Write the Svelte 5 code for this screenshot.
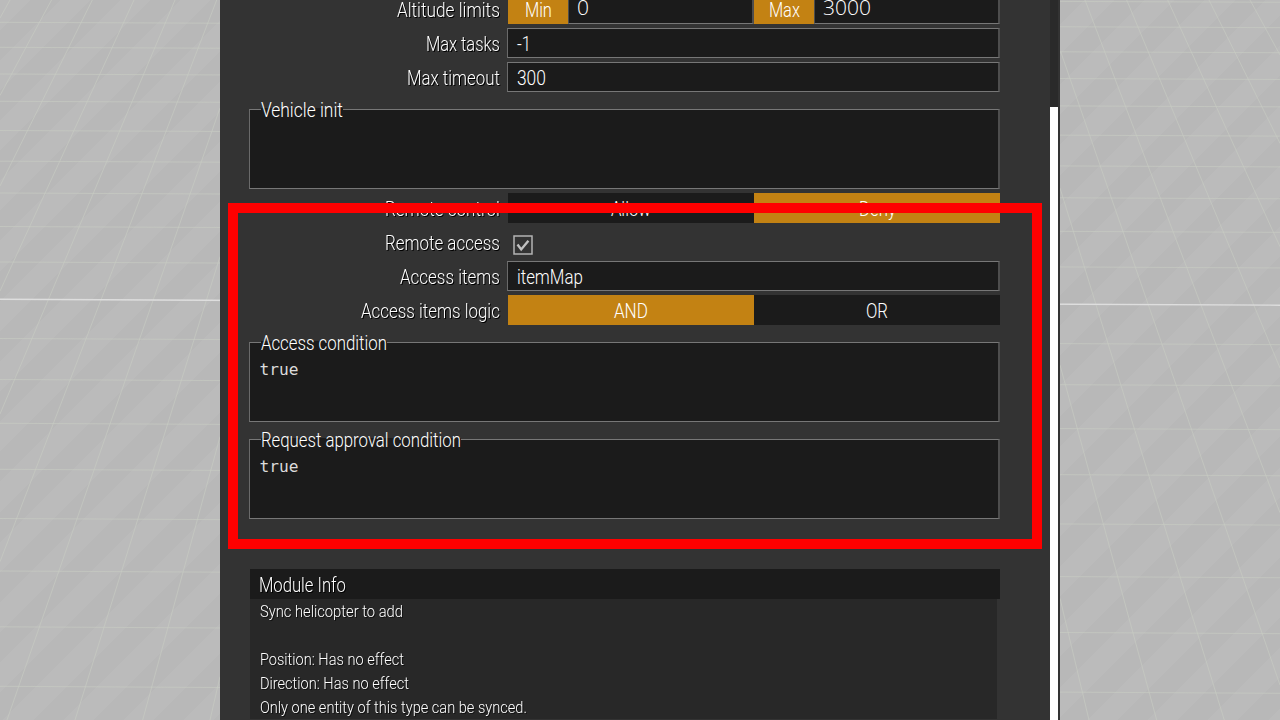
<script>
  const horizontals = [-3, 22.3, 47.3, 74, 101.3, 130.5, 161.2, 193, 226.5, 262, 338.5, 379.5, 423.3, 469.3, 518.5, 571, 626.8, 686.3];
  const verticals = [
    [10, 0, 0, 18], [51.5, 0, 0, 95.5], [92.3, 0, 0, 186], [134, 0, 0, 291],
    [175, 0, 0, 414], [216.7, 0, 0, 561.7], [220, 108, 7, 720], [220, 256.7, 75, 720],
    [220, 436.7, 142.7, 720], [220, 676.7, 210, 720],
    [1060, 598.3, 1089, 720], [1060, 365, 1156.7, 720], [1060, 188, 1224.3, 720],
    [1060.7, 51.7, 1280, 685], [1085, 0, 1280, 512.7], [1126.7, 0, 1280, 368],
    [1167.7, 0, 1280, 246.7], [1209, 0, 1280, 143.3], [1250, 0, 1280, 55]
  ];
  const info = [
    ['Sync helicopter to add', 143],
    ['', 0],
    ['Position: Has no effect', 144],
    ['Direction: Has no effect', 149],
    ['Only one entity of this type can be synced.', 267]
  ];
</script>

{#snippet text(value, width, baseline, size = 20, height = 30)}
  <svg class="text" {width} {height}>
    <text x="-0.1" y={baseline} font-size={size} textLength={width} lengthAdjust="spacingAndGlyphs">{value}</text>
  </svg>
{/snippet}

{#snippet area(label, width, value)}
  <div class="area">
    <div class="legend">{@render text(label, width, 20)}</div>
    <div class="field box">
      {#if value}
        <svg class="text" width="39" height="24">
          <text class="code" x="-0.4" y="17" font-size="16.5" textLength="39" lengthAdjust="spacingAndGlyphs">{value}</text>
        </svg>
      {/if}
    </div>
  </div>
{/snippet}

<main class="screen">
  <svg class="grid" width="1280" height="720">
    {#each horizontals as y}
      <line class="thin" x1="0" y1={y} x2="1280" y2={y + 5.3 + y / 400} />
    {/each}
    {#each verticals as [x1, y1, x2, y2]}
      <line class="thin" {x1} {y1} {x2} {y2} />
    {/each}
    <line class="horizon" x1="0" y1="299.3" x2="1280" y2="305.2" />
  </svg>

  <section class="panel">
    <div class="form">
      <div class="row">
        <div class="label">{@render text('Altitude limits', 103, 23)}</div>
        <div class="control split">
          <div class="tag">{@render text('Min', 27, 23)}</div>
          <div class="field alt">{@render text('0', 12, 20, 20.5)}</div>
          <div class="tag">{@render text('Max', 31, 23)}</div>
          <div class="field alt">{@render text('3000', 48, 20, 20.5)}</div>
        </div>
      </div>
      <div class="row">
        <div class="label">{@render text('Max tasks', 74, 23)}</div>
        <div class="control field">{@render text('-1', 14, 22)}</div>
      </div>
      <div class="row">
        <div class="label">{@render text('Max timeout', 93, 23)}</div>
        <div class="control field">{@render text('300', 29, 22)}</div>
      </div>
      {@render area('Vehicle init', 82, '')}
      <div class="row">
        <div class="label">{@render text('Remote control', 115, 23)}</div>
        <div class="control split">
          <div class="option">{@render text('Allow', 40, 23)}</div>
          <div class="option on">{@render text('Deny', 37, 23)}</div>
        </div>
      </div>
      <div class="row">
        <div class="label">{@render text('Remote access', 115, 23)}</div>
        <div class="control check">
          <svg width="20" height="20" viewBox="0 0 20 20">
            <rect x="1" y="1" width="18" height="18" fill="none" stroke="#b4b4b4" stroke-width="1.5" />
            <path d="M4.5 9.6 L8.2 14.4 L15.4 5.8" fill="none" stroke="#c0c0c0" stroke-width="2.4" />
          </svg>
        </div>
      </div>
      <div class="row">
        <div class="label">{@render text('Access items', 100, 23)}</div>
        <div class="control field">{@render text('itemMap', 66, 22)}</div>
      </div>
      <div class="row">
        <div class="label">{@render text('Access items logic', 139, 23)}</div>
        <div class="control split">
          <div class="option on">{@render text('AND', 34, 23)}</div>
          <div class="option">{@render text('OR', 22, 23)}</div>
        </div>
      </div>
      {@render area('Access condition', 126, 'true')}
      {@render area('Request approval condition', 200, 'true')}
      <div class="info">
        <div class="head">{@render text('Module Info', 87, 23)}</div>
        <div class="body">
          {#each info as [line, width]}
            <div class="line">{#if line}{@render text(line, width, 18, 17, 24)}{/if}</div>
          {/each}
        </div>
      </div>
    </div>
    <div class="track"><div class="thumb"></div></div>
  </section>
  <div class="highlight"></div>
</main>

<style>
  :global(body) { margin: 0; overflow: hidden; }
  .screen {
    position: relative;
    width: 1280px;
    height: 720px;
    overflow: hidden;
    display: flex;
    justify-content: center;
    background: repeating-linear-gradient(135deg, #bbb 0 21.3px, #b8b8b8 21.3px 42.6px);
    font-family: Roboto, sans-serif;
    font-weight: 360;
    color: #fff;
  }
  .grid { position: absolute; inset: 0; }
  .thin { stroke: #c8ccc3; stroke-width: 1; opacity: 0.65; }
  .horizon { stroke: #dedede; stroke-width: 1.4; }
  .panel {
    position: relative;
    width: 840px;
    height: 720px;
    box-sizing: border-box;
    padding: 0 2px 0 30px;
    display: flex;
    justify-content: space-between;
    background: #333;
    overflow: hidden;
  }
  .form {
    width: 750px;
    margin-top: -6px;
    display: flex;
    flex-direction: column;
    gap: 4px;
    flex-shrink: 0;
  }
  .text { display: block; overflow: visible; flex-shrink: 0; }
  .text text { fill: #fff; }
  .row { display: flex; height: 30px; flex-shrink: 0; }
  .label {
    width: 258px;
    box-sizing: border-box;
    padding-right: 8px;
    display: flex;
    justify-content: flex-end;
    filter: drop-shadow(1.4px 1.2px 0 #000);
  }
  .control { width: 492px; box-sizing: border-box; }
  .split { display: flex; }
  .field {
    box-sizing: border-box;
    background: #1b1b1b;
    border: solid #777;
    border-width: 1px 2px 1px 1px;
    border-right-color: #4d4d4d;
    border-left-color: #6a6a6a;
  }
  .control.field { margin-left: -1px; width: 493px; padding-left: 9px; }
  .tag {
    width: 60px;
    display: flex;
    justify-content: center;
    background: #c38213;
  }
  .alt {
    width: 186px;
    padding-left: 8px;
    border-left-color: #4d4d4d;
    font-family: "Open Sans", sans-serif;
    font-weight: 330;
  }
  .option {
    width: 246px;
    display: flex;
    justify-content: center;
    background: #1b1b1b;
  }
  .on { background: #c38213; }
  .check { padding: 8px 0 0 5px; }
  .check svg { display: block; }
  .area {
    position: relative;
    height: 93px;
    box-sizing: border-box;
    padding-top: 13px;
    flex-shrink: 0;
  }
  .box { height: 80px; margin-left: -1px; padding: 15px 0 0 10px; }
  .legend {
    position: absolute;
    left: 11px;
    top: 1px;
    height: 14px;
  }
  .legend::before {
    content: "";
    position: absolute;
    inset: 11px 0 -3px;
    background: #1b1b1b;
  }
  .legend :global(svg) { position: relative; }
  .text .code {
    font-family: "DejaVu Sans Mono", monospace;
    font-weight: 400;
    fill: #dcdcdc;
  }
  .info { margin-top: 46px; flex-shrink: 0; }
  .head { height: 30px; padding-left: 9px; background: #1b1b1b; }
  .head :global(svg) { filter: drop-shadow(1.4px 1.2px 0 #000); }
  .body { width: 737px; height: 120px; padding-left: 10px; background: #282828; }
  .line { height: 24px; filter: drop-shadow(1px 1px 0 #111); }
  .track { width: 8px; height: 720px; background: #2a2a2a; display: flex; align-items: flex-end; }
  .thumb { width: 8px; height: 613px; background: #fff; }
  .highlight {
    position: absolute;
    left: 228px;
    top: 203px;
    width: 814px;
    height: 346px;
    box-sizing: border-box;
    border: 10px solid #f00;
  }
</style>
